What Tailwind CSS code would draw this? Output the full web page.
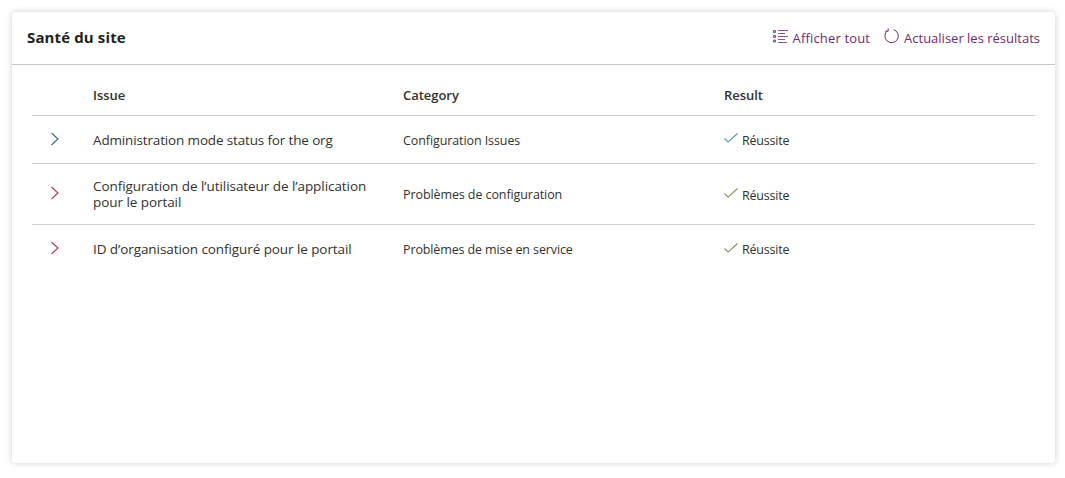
<!DOCTYPE html>
<html lang="fr">
<head>
<meta charset="utf-8">
<script src="https://cdn.jsdelivr.net/npm/@tailwindcss/browser@4"></script>
<title>Santé du site</title>
</head>
<body class="bg-white font-['Open_Sans','Noto_Sans',sans-serif] text-[#323130] h-[478px] overflow-hidden">
<div class="pt-3 pl-3 pr-[10px]">
  <div class="h-[451px] rounded-[4px] bg-white shadow-[0_0_6px_rgba(0,0,0,0.2)] flex flex-col">
    <div class="h-[53px] flex items-center justify-between pl-[15px] pr-[15px] border-b border-[#c8c6c4]">
      <h1 class="text-[15px] font-bold text-[#201f1e] tracking-[0.13px] mb-[2px]">Santé du site</h1>
      <div class="flex items-center gap-[14px] text-[13px] text-[#742774]">
        <a class="flex items-center gap-[5px]">
          <svg class="w-[15px] h-[15px] -mt-1" viewBox="0 0 15 15" fill="none" stroke="#742774" stroke-width="1">
            <path d="M.5 1.5h2v2h-2zM.5 6.5h2v2h-2zM.5 11h2v2h-2z" fill="#c9b0c9" stroke="#8a4f8a"/>
            <path d="M5 1.5H15M5 4.5H12M5 7.5H15M5 10.5H12M5 13.5H14" stroke-width="0.8"/>
          </svg>
          <span class="pt-[2px] tracking-[0.15px]">Afficher tout</span>
        </a>
        <a class="flex items-center gap-[5px]">
          <svg class="w-[15px] h-[16px] -mt-[5px]" viewBox="0 0 15 16" fill="none" stroke="#742774" stroke-width="1">
            <path d="M3.6 2.6A6.7 6.7 0 1 0 9.6 1.6"/>
            <path d="M4.2 0.2V3.2H1.2" stroke-width="0.9"/>
          </svg>
          <span class="pt-[2px]">Actualiser les résultats</span>
        </a>
      </div>
    </div>
    <div class="pl-5 pr-5">
      <div class="grid grid-cols-[61px_310px_321px_1fr] h-[51px] pt-[12px] items-center border-b border-[#d2d0ce] text-[13px] font-semibold text-[#323130] tracking-[-0.04px]">
        <div></div><div>Issue</div><div>Category</div><div>Result</div>
      </div>
      <div class="grid grid-cols-[61px_310px_321px_1fr] h-[48px] items-center border-b border-[#d2d0ce] text-[12.5px] tracking-[-0.09px]">
        <svg class="w-[10px] h-[14px] ml-[18px] -mt-[2px]" viewBox="0 0 10 14" fill="none" stroke="#2f6c8c" stroke-width="1.1"><path d="M1.5 1l6.5 6-6.5 6"/></svg>
        <div class="text-[13.5px] tracking-[-0.15px] pt-[2px]">Administration mode status for the org</div>
        <div class="pt-[3px]">Configuration Issues</div>
        <div class="flex items-center gap-[4px]">
          <svg class="w-[14px] h-[10px] -mt-[3px]" viewBox="0 0 14 10" fill="none" stroke="#4a93ad" stroke-width="1.1"><path d="M0.5 5.5l3.6 3.6L13.5 0.5"/></svg>
          <span class="pt-[3px] tracking-[-0.2px]">Réussite</span>
        </div>
      </div>
      <div class="grid grid-cols-[61px_310px_321px_1fr] h-[61px] items-center border-b border-[#d2d0ce] text-[12.5px] tracking-[-0.09px]">
        <svg class="w-[10px] h-[14px] ml-[18px] -mt-[2px]" viewBox="0 0 10 14" fill="none" stroke="#a83a4c" stroke-width="1.1"><path d="M1.5 1l6.5 6-6.5 6"/></svg>
        <div class="text-[13.5px] leading-[16px] tracking-[-0.06px]">Configuration de l’utilisateur de l’application<br>pour le portail</div>
        <div class="pt-[2px]">Problèmes de configuration</div>
        <div class="flex items-center gap-[4px]">
          <svg class="w-[14px] h-[10px] -mt-[3px]" viewBox="0 0 14 10" fill="none" stroke="#8a8a4e" stroke-width="1.1"><path d="M0.5 5.5l3.6 3.6L13.5 0.5"/></svg>
          <span class="pt-[4px] tracking-[-0.2px]">Réussite</span>
        </div>
      </div>
      <div class="grid grid-cols-[61px_310px_321px_1fr] h-[48px] items-center text-[12.5px] tracking-[-0.09px]">
        <svg class="w-[10px] h-[14px] ml-[18px] -mt-[2px]" viewBox="0 0 10 14" fill="none" stroke="#a83a4c" stroke-width="1.1"><path d="M1.5 1l6.5 6-6.5 6"/></svg>
        <div class="text-[13.5px] tracking-[-0.08px] pt-[1px]">ID d’organisation configuré pour le portail</div>
        <div class="pt-[2px] tracking-[-0.12px]">Problèmes de mise en service</div>
        <div class="flex items-center gap-[4px]">
          <svg class="w-[14px] h-[10px] -mt-[3px]" viewBox="0 0 14 10" fill="none" stroke="#8a8a4e" stroke-width="1.1"><path d="M0.5 5.5l3.6 3.6L13.5 0.5"/></svg>
          <span class="pt-[2px] tracking-[-0.2px]">Réussite</span>
        </div>
      </div>
    </div>
  </div>
</div>
</body>
</html>
